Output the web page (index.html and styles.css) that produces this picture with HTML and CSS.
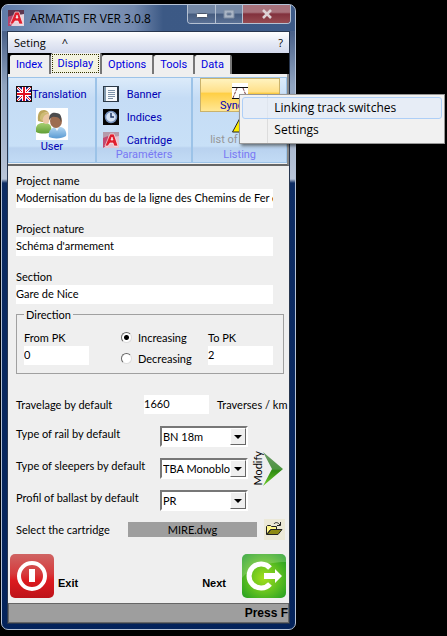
FILE: index.html
```html
<!DOCTYPE html>
<html lang="en">
<head>
  <meta charset="UTF-8">
  <meta name="viewport" content="width=device-width, initial-scale=1.0">
  <title>ARMATIS FR VER 3.0.8</title>
  <link rel="stylesheet" href="styles.css">
</head>
<body>
  <div class="window">
    <header class="titlebar">
      <svg class="app-icon" width="16" height="16" viewBox="0 0 16 16">
        <rect width="16" height="16" fill="#e6d3dd"/>
        <path d="M0 0h16v4L0 7z" fill="#5c3650"/>
        <path d="M0 7l5-2 2 6-4 5H0z" fill="#b5446c"/>
        <path d="M2 14L7 2h4l4 12h-4l-1-3H7l-2 3zM8 8h2L9 5z" fill="#e01f2f" stroke="#fff" stroke-width=".6"/>
      </svg>
      <h1>ARMATIS FR VER 3.0.8</h1>
      <div class="window-buttons">
        <button class="min" aria-label="Minimize"><svg width="12" height="8" viewBox="0 0 12 8"><rect x=".5" y="3.500" width="11" height="4" rx="1" fill="#fff" stroke="#4a566b"/></svg></button>
        <button class="max" aria-label="Maximize"><svg width="12" height="10" viewBox="0 0 12 10"><path d="M1 1h10v8H1zM4 4v2h4V4z" fill="#a9b4c4" fill-rule="evenodd" stroke="#7b8aa0"/></svg></button>
        <button class="close" aria-label="Close"><svg width="12" height="10" viewBox="0 0 12 10"><path d="M2 1l8 8M10 1L2 9" stroke="#ddd0d4" stroke-width="2.500"/></svg></button>
      </div>
    </header>

    <div class="client">
      <nav class="menubar">
        <button>Seting</button>
        <button>^</button>
        <button class="help">?</button>
      </nav>

      <div class="tabs" role="tablist">
        <button role="tab">Index</button>
        <button role="tab" class="active" aria-selected="true"><span>Display</span></button>
        <button role="tab">Options</button>
        <button role="tab">Tools</button>
        <button role="tab">Data</button>
      </div>

      <section class="ribbon">
        <div class="group language">
          <button class="tool">
            <svg width="16" height="16" viewBox="0 0 16 16">
              <rect width="16" height="16" fill="#12127c"/>
              <path d="M0 0l16 16M16 0L0 16" stroke="#fff" stroke-width="3"/>
              <path d="M0 0l16 16M16 0L0 16" stroke="#e01020"/>
              <path d="M8 0v16M0 8h16" stroke="#fff" stroke-width="4"/>
              <path d="M8 0v16M0 8h16" stroke="#e01020" stroke-width="2"/>
              <rect x=".5" y=".5" width="15" height="15" fill="none" stroke="#111"/>
            </svg>
            Translation
          </button>
          <button class="tool big">
            <svg width="32" height="32" viewBox="0 0 32 32">
              <defs>
                <linearGradient id="green" x2="0" y2="1"><stop stop-color="#a8cf72"/><stop offset="1" stop-color="#5f9e35"/></linearGradient>
                <linearGradient id="blue" x2="0" y2="1"><stop stop-color="#b4d7f3"/><stop offset="1" stop-color="#5b9bd3"/></linearGradient>
              </defs>
              <rect width="32" height="32" fill="#fff"/>
              <path d="M0 24c-1-5 1-8 5-9h6c4 1 5 5 4 9-4 2-11 2-15 0z" fill="url(#green)"/>
              <path d="M2 13C1 5 4 2 8 2s6 4 5 8l-2 4H6z" fill="#bba65c"/>
              <ellipse cx="10" cy="10" rx="4" ry="6" fill="#eac6a4"/>
              <path d="M4 11c0-6 3-8 9-5-5 0-5 2-7 7z" fill="#cdbb75"/>
              <path d="M13 29c-1-6 2-9 6-10h6c4 1 6 5 5 9-4 3-13 3-17 1z" fill="url(#blue)"/>
              <path d="M18 18h6l-3 5z" fill="#f2f6fa"/>
              <ellipse cx="20" cy="13" rx="6" ry="7" fill="#9c6c50"/>
              <path d="M13 12c0-6 3-8 7-7 5 0 6 4 5 9-1-4-3-5-6-5-3-1-4 1-6 3z" fill="#4b4b4d"/>
            </svg>
            User
          </button>
        </div>

        <div class="group params">
          <button class="tool">
            <svg width="16" height="16" viewBox="0 0 16 16">
              <rect width="16" height="16" fill="#2c3947"/>
              <path d="M1 14V1h3v14H1z" fill="#8098ad"/>
              <path d="M3 1h11v14H3z" fill="#f6f9fc"/>
              <path d="M5 4.500h7M5 6.500h7M5 8.500h7M5 10.500h7M5 12.500h5" stroke="#7d93aa"/>
            </svg>
            Banner
          </button>
          <button class="tool">
            <svg width="16" height="16" viewBox="0 0 16 16">
              <rect width="16" height="16" fill="#050505"/>
              <circle cx="8" cy="8" r="5.500" fill="#d6e3f4" stroke="#7894bf" stroke-width="1.500"/>
              <path d="M8 4v4h3" fill="none" stroke="#223a66" stroke-width="1.500"/>
            </svg>
            Indices
          </button>
          <button class="tool">
            <svg width="16" height="16" viewBox="0 0 16 16">
              <rect width="16" height="16" fill="#e3c3d1"/>
              <path d="M0 0h16v4L0 7z" fill="#b69aab"/>
              <path d="M0 6l5-2 2 7-7 5z" fill="#c14870"/>
              <path d="M2 14L7 2h4l4 12h-4l-1-3H7l-2 3zM8 8h2L9 5z" fill="#e01f2f" stroke="#fff" stroke-width=".6"/>
            </svg>
            Cartridge
          </button>
          <h2>Paraméters</h2>
        </div>

        <div class="group listing">
          <button class="tool big highlight">
            <svg width="16" height="16" viewBox="0 0 16 16">
              <rect width="16" height="16" fill="#fff"/>
              <path d="M0 4.500h16M0 15.500h16" stroke="#111"/>
              <path d="M5 5L1 15M11 5l4 10" stroke="#7b3b3b" stroke-dasharray="3 1"/>
            </svg>
            Synchro
          </button>
          <button class="tool big disabled" disabled>
            <svg width="16" height="16" viewBox="0 0 16 16">
              <path d="M8 1l7.500 14H.5z" fill="#ffee00" stroke="#222"/>
              <path d="M8 5v5M8 12v2" stroke="#111" stroke-width="2"/>
            </svg>
            list of errors
          </button>
          <h2>Listing</h2>

          <div class="dropdown" role="menu">
            <button role="menuitem" class="hovered">Linking track switches</button>
            <button role="menuitem">Settings</button>
          </div>
        </div>
      </section>

      <form class="settings">
        <div class="field">
          <label for="projectName">Project name</label>
          <input type="text" id="projectName" value="Modernisation du bas de la ligne des Chemins de Fer d">
        </div>
        <div class="field">
          <label for="projectNature">Project nature</label>
          <input type="text" id="projectNature" value="Schéma d'armement">
        </div>
        <div class="field">
          <label for="section">Section</label>
          <input type="text" id="section" value="Gare de Nice">
        </div>

        <fieldset>
          <legend>Direction</legend>
          <div class="pk">
            <label for="fromPk">From PK</label>
            <input type="text" id="fromPk" value="0">
          </div>
          <div class="radios">
            <label><input type="radio" name="direction" checked> Increasing</label>
            <label><input type="radio" name="direction"> Decreasing</label>
          </div>
          <div class="pk">
            <label for="toPk">To PK</label>
            <input type="text" id="toPk" value="2">
          </div>
        </fieldset>

        <div class="travelage">
          <label for="travelage">Travelage by default</label>
          <input type="text" id="travelage" value="1660">
          <span>Traverses / km</span>
        </div>

        <div class="defaults">
          <div class="rows">
            <div class="row">
              <label for="rail">Type of rail by default</label>
              <div class="combo">
                <select id="rail"><option>BN 18m</option></select>
                <span class="arrow"></span>
              </div>
            </div>
            <div class="row">
              <label for="sleepers">Type of sleepers by default</label>
              <div class="combo">
                <select id="sleepers"><option>TBA Monoblo</option></select>
                <span class="arrow"></span>
              </div>
            </div>
            <div class="row">
              <label for="ballast">Profil of ballast by default</label>
              <div class="combo">
                <select id="ballast"><option>PR</option></select>
                <span class="arrow"></span>
              </div>
            </div>
          </div>
          <button type="button" class="modify">
            <span>Modify</span>
            <svg width="20" height="36" viewBox="0 0 20 36">
              <defs><linearGradient id="arrow" x2="0" y2="1"><stop stop-color="#6d9a68"/><stop offset=".5" stop-color="#4c9440"/><stop offset=".55" stop-color="#2f8a12"/><stop offset="1" stop-color="#6fce2c"/></linearGradient></defs>
              <path d="M0 1l20 17L0 35l9-17z" fill="url(#arrow)"/>
            </svg>
          </button>
        </div>

        <div class="cartridge">
          <label for="cartridge">Select the cartridge</label>
          <input type="text" id="cartridge" value="MIRE.dwg" readonly>
          <button type="button" class="browse" aria-label="Browse">
            <svg width="18" height="16" viewBox="0 0 18 16">
              <path d="M1.500 13.500v-8l1-1h3l1 1h5v3h-6z" fill="#fff68a" stroke="#222"/>
              <path d="M2 13.500l4-5h11l-4 5z" fill="#8d8a12" stroke="#222"/>
              <path d="M9 3c1-2 4-2 6 1M15.500 1v3.500H12" fill="none" stroke="#222"/>
            </svg>
          </button>
        </div>

        <div class="actions">
          <button type="button">
            <svg width="44" height="44" viewBox="0 0 44 44">
              <defs><linearGradient id="red" x2="0" y2="1"><stop stop-color="#cf6463"/><stop offset=".45" stop-color="#d63a3c"/><stop offset=".6" stop-color="#dc1a1f"/><stop offset="1" stop-color="#bd1319"/></linearGradient></defs>
              <rect width="44" height="44" rx="5" fill="url(#red)"/>
              <circle cx="22" cy="22" r="13" fill="none" stroke="#fff" stroke-width="4"/>
              <rect x="19" y="15" width="6" height="13" fill="#fff"/>
            </svg>
            Exit
          </button>
          <button type="submit">
            Next
            <svg width="44" height="44" viewBox="0 0 44 44">
              <defs><radialGradient id="lime" cy=".55" r=".7"><stop stop-color="#a3e01c"/><stop offset=".5" stop-color="#60c020"/><stop offset="1" stop-color="#1d9a22"/></radialGradient></defs>
              <rect width="44" height="44" rx="5" fill="url(#lime)"/>
              <path d="M0 5a5 5 0 0 1 5-5h34a5 5 0 0 1 5 5v3C25 8 8 14 0 24z" fill="#fff" opacity=".2"/>
              <path d="M28 14a12 12 0 1 0 0 16" fill="none" stroke="#fff" stroke-width="5"/>
              <path d="M22 19h11v-4l7 7-7 7v-4H22z" fill="#fff"/>
            </svg>
          </button>
        </div>
      </form>

      <footer class="statusbar">Press F</footer>
    </div>
  </div>
</body>
</html>
```

FILE: styles.css
```css
* {
  box-sizing: border-box;
}

body {
  margin: 0;
  padding: 4px 1px;
  background-color: #000;
  color: #000;
  font-family: Roboto, "Liberation Sans", Arial, sans-serif;
  font-size: 11px;
}

button,
input,
select {
  margin: 0;
  padding: 0;
  border: none;
  border-radius: 0;
  background: none;
  color: inherit;
  font: inherit;
}

svg {
  display: block;
  flex-shrink: 0;
}

h1,
h2 {
  margin: 0;
  font-size: inherit;
  font-weight: normal;
}

/* Window frame */
.window {
  width: 66%;
  min-width: 295px;
  padding: 0 5px 5px;
  border: 1px solid #b4c2d6;
  border-radius: 7px;
  background: linear-gradient(#6f86ab 0, #4a6189 28px, #8fa3bf 80px, #b9c5d8 174px, #0d2c63 178px, #04235b 100%);
}

.titlebar {
  display: flex;
  align-items: center;
  height: 26px;
  margin: 0 -5px;
  padding: 0 4px 0 6px;
  border-radius: 6px 6px 0 0;
  background: linear-gradient(to right, #5f7ba8 0, #8a9fbe 25%, #7389ae 45%, #3c5985 55%, #3d5a87 100%);
}

.titlebar h1 {
  flex: 1;
  margin-left: 6px;
  font-family: "Open Sans", "Segoe UI", sans-serif;
  font-size: 12px;
  white-space: nowrap;
}

.window-buttons {
  display: flex;
  align-self: flex-start;
  height: 19px;
  border: 1px solid #b5c1d2;
  border-top: none;
  border-radius: 0 0 4px 4px;
  overflow: hidden;
}

.window-buttons button {
  display: flex;
  align-items: center;
  justify-content: center;
  width: 27px;
  background: linear-gradient(#7589a7 45%, #455b7e 50%, #5b7195);
}

.window-buttons button + button {
  border-left: 1px solid #b5c1d2;
}

.window-buttons .close {
  width: 48px;
  background: linear-gradient(#a8727c 40%, #82313d 50%, #964b52);
}

.client {
  border: 1px solid #27364f;
  background: #efefef;
}

.menubar {
  display: flex;
  align-items: center;
  gap: 16px;
  height: 21px;
  padding: 0 6px;
  background: linear-gradient(#fff, #e6eaf5 50%, #d3daed);
  font-family: "Open Sans", "Segoe UI", sans-serif;
}

.menubar .help {
  margin-left: auto;
}

/* Tabs */
.tabs {
  display: flex;
  align-items: flex-end;
  height: 21px;
  padding-left: 2px;
  background: #000;
  color: #0000e0;
}

.tabs button {
  height: 19px;
  padding: 0 6px;
  border-right: 2px solid #777;
  border-radius: 2px 2px 0 0;
  background: #efefef;
}

.tabs .active {
  height: 21px;
  padding: 0 1px 1px;
}

.tabs .active span {
  display: block;
  padding: 2px 5px;
  border: 1px dotted #333300;
  background: #f3f3e0;
}

/* Ribbon */
.ribbon {
  display: grid;
  grid-template-columns: 88fr 97fr 95fr;
  padding: 3px 0 1px;
  border-right: 2px solid #888;
  border-bottom: 2px solid #666;
  color: #0000b4;
}

.group {
  display: flex;
  flex-direction: column;
  height: 86px;
  border: 1px solid #9cc3e8;
  background: linear-gradient(#dcebfa 0, #c5dcf5 20px, #c8e0f7 68px, #b9d2ef 70px, #c2dbf5 100%);
}

.group h2 {
  margin-top: auto;
  color: #7878f4;
  text-align: center;
  line-height: 14px;
}

.tool {
  display: flex;
  align-items: center;
}

.tool.big {
  flex-direction: column;
}

.language {
  gap: 6px;
  padding: 8px 7px 0;
}

.language .big {
  line-height: 14px;
}

.params {
  padding-top: 8px;
}

.params .tool {
  gap: 8px;
  padding-left: 6px;
}

.params .tool + .tool {
  margin-top: 7px;
}

.listing {
  position: relative;
  align-items: center;
}

.highlight {
  width: 80px;
  height: 34px;
  padding-top: 4px;
  border: 1px solid #c9b26c;
  background: linear-gradient(#fff3bf, #ffe089 40%, #ffcf45 45%, #ffe795);
}

.disabled {
  margin-top: 5px;
  color: #969696;
}

.dropdown {
  position: absolute;
  top: 16px;
  left: 46px;
  z-index: 10;
  width: 206px;
  padding: 2px;
  border: 1px solid #979797;
  background: linear-gradient(to right, #f1f1f1 27px, #dcdcdc 27px, #dcdcdc 28px, #f1f1f1 28px);
  box-shadow: 2px 2px 3px rgba(0, 0, 0, 0.5);
}

.dropdown button {
  display: block;
  width: 100%;
  height: 22px;
  padding-left: 31px;
  border: 1px solid transparent;
  border-radius: 3px;
  color: #000;
  font-family: "Open Sans", "Segoe UI", sans-serif;
  font-size: 12px;
  line-height: 18px;
  text-align: left;
}

.dropdown .hovered {
  border-color: #aecff7;
  background: rgba(225, 235, 250, 0.6);
}

/* Form */
.settings {
  padding: 7px 0 0 8px;
  font-family: Lato, "Liberation Sans", Arial, sans-serif;
}

.settings input[type="text"] {
  display: block;
  width: 100%;
  height: 19px;
  padding-bottom: 3px;
  background: #fff;
}

.field {
  margin: 0 16px 13px 0;
}

.field:nth-child(3) {
  margin-bottom: 4px;
}

.field label,
.pk label {
  display: block;
  line-height: 16px;
}

fieldset {
  display: flex;
  min-width: 0;
  margin: 0 5px 21px 0;
  padding: 9px 10px 7px 7px;
  border: 1px solid #a0a0a0;
}

legend {
  padding: 0 2px;
  line-height: 13px;
}

.pk {
  width: 65px;
}

.pk:last-child {
  margin-left: auto;
}

.radios {
  display: flex;
  flex-direction: column;
  gap: 6px;
  margin-left: 32px;
}

.radios label {
  display: flex;
  align-items: center;
  gap: 6px;
  line-height: 15px;
}

.radios input {
  width: 11px;
  height: 11px;
  appearance: none;
  border: 1px solid;
  border-color: #666 #ddd #ddd #666;
  border-radius: 50%;
  background: #fff;
}

.radios input:checked {
  background: radial-gradient(#000 2px, #fff 3px);
}

.travelage {
  display: flex;
  align-items: center;
  margin-bottom: 12px;
  white-space: nowrap;
}

.travelage label {
  width: 128px;
  flex-shrink: 0;
}

.settings .travelage input {
  width: 65px;
  flex-shrink: 0;
  margin-right: 8px;
}

.defaults {
  display: flex;
  gap: 4px;
  margin-bottom: 8px;
}

.rows {
  flex: 1;
  display: flex;
  flex-direction: column;
  gap: 11px;
}

.row {
  display: flex;
  justify-content: space-between;
  line-height: 15px;
  white-space: nowrap;
}

.combo {
  position: relative;
  width: 88px;
  height: 21px;
  border: 2px solid;
  border-color: #777 #fff #fff #777;
}

.combo select {
  display: block;
  width: 100%;
  height: 17px;
  padding-left: 1px;
  appearance: none;
  background: #fff;
}

.arrow {
  position: absolute;
  top: 0;
  right: 0;
  display: flex;
  align-items: center;
  justify-content: center;
  width: 16px;
  height: 17px;
  border: 1px solid;
  border-color: #fff #666 #666 #fff;
  background: #efefef;
  pointer-events: none;
}

.arrow::before {
  content: "";
  border: 4px solid transparent;
  border-top-color: #000;
  border-bottom: none;
}

.modify {
  display: flex;
  align-items: center;
  margin-right: 6px;
}

.modify span {
  writing-mode: vertical-rl;
  transform: rotate(180deg);
  line-height: 11px;
}

.cartridge {
  display: flex;
  align-items: center;
  margin-bottom: 13px;
  padding-right: 4px;
}

.cartridge label {
  width: 112px;
}

.settings .cartridge input {
  flex: 1;
  min-width: 0;
  height: 15px;
  padding: 0;
  background: #9e9e9e;
  text-align: center;
}

.browse {
  margin-left: 7px;
  padding: 2px 2px 3px 1px;
  background: #ece9d8;
}

.actions {
  display: flex;
  justify-content: space-between;
  margin: 0 3px 5px -6px;
}

.actions button {
  display: flex;
  align-items: flex-end;
  gap: 4px;
  padding-top: 1px;
  font-family: "Liberation Sans", Arial, sans-serif;
  font-weight: bold;
  line-height: 30px;
}

.actions button:last-child {
  gap: 16px;
}

.statusbar {
  height: 20px;
  border: 1px solid #666;
  background: #9e9e9e;
  font-family: "Liberation Sans", Arial, sans-serif;
  font-size: 12px;
  font-weight: bold;
  line-height: 18px;
  text-align: right;
}
```
